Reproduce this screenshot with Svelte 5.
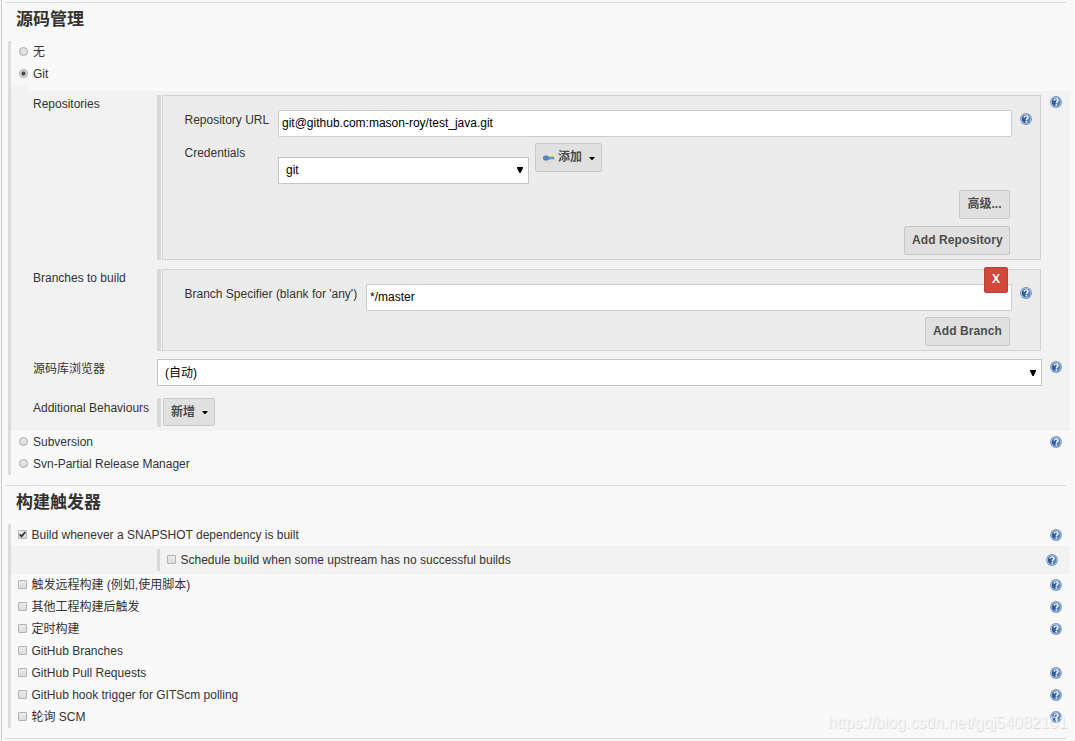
<script lang="ts">
  type Trigger = { label: string; help: boolean };

  const triggers: Trigger[] = [
    { label: "触发远程构建 (例如,使用脚本)", help: true },
    { label: "其他工程构建后触发", help: true },
    { label: "定时构建", help: true },
    { label: "GitHub Branches", help: false },
    { label: "GitHub Pull Requests", help: true },
    { label: "GitHub hook trigger for GITScm polling", help: true },
    { label: "轮询 SCM", help: true },
  ];

  let scm = $state("git");
  let repoUrl = $state("git@github.com:mason-roy/test_java.git");
  let branch = $state("*/master");
</script>

{#snippet help()}
  <svg class="help" viewBox="0 0 12 12" role="img" aria-label="Help">
    <circle cx="6" cy="6" r="5.9" fill="#7393bf" />
    <circle cx="6" cy="6" r="5" fill="#c3d2e6" />
    <circle cx="6" cy="6" r="4.3" fill="#2f5a9e" />
    <path d="M6 1.7a4.3 4.3 0 0 1 0 8.6z" fill="#5e86bc" />
    <path d="M4.1 4.6C4.2 2.4 8 2.3 8 4.5c0 1.3-1.8 1.3-1.8 2.7" fill="none" stroke="#fff" stroke-width="1.4" />
    <rect x="5.4" y="8.1" width="1.6" height="1.4" fill="#fff" />
  </svg>
{/snippet}

{#snippet radio(value: string, label: string, hasHelp: boolean)}
  <div class="row">
    <label class="choice">
      <input class="radio" type="radio" name="scm" {value} bind:group={scm} />
      <span>{label}</span>
    </label>
    {#if hasHelp}{@render help()}{/if}
  </div>
{/snippet}

{#snippet check(label: string, checked: boolean, hasHelp: boolean)}
  <div class="row">
    <label class="choice choice--check">
      <span class="box">
        {#if checked}
          <svg viewBox="0 0 9 9"><path d="M1.8 4.4 3.6 6.4 7.3 2" fill="none" stroke="#333" stroke-width="1.8" /></svg>
        {/if}
      </span>
      <span>{label}</span>
    </label>
    {#if hasHelp}{@render help()}{/if}
  </div>
{/snippet}

{#snippet arrow()}
  <svg class="arrow" viewBox="0 0 6 6"><path d="M0 0h6v1L3.6 6H2.4L0 1z" fill="#000" /></svg>
{/snippet}

{#snippet caret()}
  <svg class="caret" viewBox="0 0 6 3"><path d="M0 0h6L3.5 3h-1z" fill="#000" /></svg>
{/snippet}

<main class="config">
  <section class="section">
    <h2>源码管理</h2>
    <div class="group">
      {@render radio("none", "无", false)}
      {@render radio("git", "Git", false)}

      <div class="git">
        <div class="field field--repos">
          <span class="field__label">Repositories</span>
          <div class="repeat">
            <div class="panel">
              <div class="panel__row panel__row--url">
                <span class="url-label">Repository URL</span>
                <input class="text" type="text" bind:value={repoUrl} />
                {@render help()}
              </div>
              <div class="panel__row panel__row--creds">
                <span class="creds-label">Credentials</span>
                <div class="select select--creds">git{@render arrow()}</div>
                <button class="btn btn--add">
                  <svg class="key" viewBox="0 0 12 10">
                    <ellipse cx="5" cy="9" rx="3.6" ry=".6" fill="#cfcfcf" />
                    <circle cx="9.2" cy="2.6" r="2" fill="#f1e98b" />
                    <ellipse cx="3" cy="5" rx="3" ry="2.6" fill="#4e7bb2" />
                    <path d="M4.5 3.8h6.7v2.8H9.6v-.9H8.2v.9H4.5z" fill="#6490c3" />
                    <circle cx="2" cy="4.7" r=".6" fill="#9dbce0" />
                  </svg>
                  <span>添加</span>
                  {@render caret()}
                </button>
              </div>
              <div class="actions">
                <button class="btn btn--advanced">高级...</button>
                <button class="btn btn--latin">Add Repository</button>
              </div>
            </div>
          </div>
          {@render help()}
        </div>

        <div class="field field--branches">
          <span class="field__label">Branches to build</span>
          <div class="repeat">
            <div class="panel">
              <button class="remove">X</button>
              <div class="panel__row panel__row--branch">
                <span class="branch-label">Branch Specifier (blank for 'any')</span>
                <input class="text" type="text" bind:value={branch} />
                {@render help()}
              </div>
              <div class="actions">
                <button class="btn btn--latin btn--branch">Add Branch</button>
              </div>
            </div>
          </div>
        </div>

        <div class="field field--browser">
          <span class="field__label">源码库浏览器</span>
          <div class="select">(自动){@render arrow()}</div>
          {@render help()}
        </div>

        <div class="field field--extra">
          <span class="field__label">Additional Behaviours</span>
          <div class="repeat repeat--extra">
            <button class="btn btn--new"><span>新增</span>{@render caret()}</button>
          </div>
        </div>
      </div>

      {@render radio("svn", "Subversion", true)}
      {@render radio("svnprm", "Svn-Partial Release Manager", false)}
    </div>
  </section>

  <section class="section section--triggers">
    <h2>构建触发器</h2>
    <div class="group">
      {@render check("Build whenever a SNAPSHOT dependency is built", true, true)}
      <div class="nested">
        {@render check("Schedule build when some upstream has no successful builds", false, true)}
      </div>
      {#each triggers as t}
        {@render check(t.label, false, t.help)}
      {/each}
    </div>
  </section>

  <div class="watermark">https://blog.csdn.net/gqj54082101</div>
</main>

<style>
  :global(body) {
    background: #f9f9f9;
  }

  .config {
    position: relative;
    box-sizing: border-box;
    width: 1074px;
    height: 741px;
    margin-left: 1px;
    padding: 2px 0 0 3px;
    border-left: 1px solid #ccc;
    overflow: hidden;
    color: #333;
    font: 12px/22px "Liberation Sans", "Noto Sans CJK SC", sans-serif;
    white-space: nowrap;
  }

  .config :global(*) {
    box-sizing: border-box;
  }

  .section {
    width: 1061px;
    height: 483px;
    border-top: 1px solid #ddd;
  }

  .section--triggers {
    height: 254px;
    border-bottom: 1px solid #ddd;
  }

  h2 {
    height: 38px;
    margin: 0;
    padding: 4px 0 0 11px;
    font-size: 17px;
    line-height: 25px;
    font-weight: bold;
  }

  .group {
    width: 1062px;
    margin-left: 3px;
    border-left: 3px solid #ddd;
  }

  .row {
    display: flex;
    align-items: center;
    justify-content: space-between;
    height: 22px;
    padding-right: 8px;
  }

  .choice {
    display: flex;
    align-items: center;
    gap: 5px;
    padding-left: 8px;
  }

  .choice--check {
    padding-left: 7px;
    gap: 4.5px;
  }

  .radio {
    appearance: none;
    width: 9px;
    height: 9px;
    margin: 0 0 2px;
    border: 1px solid #a8a8a8;
    border-radius: 50%;
    background: linear-gradient(#e9e9e9, #ddd);
  }

  .radio:checked {
    background: radial-gradient(circle, #4a4a4a 1.7px, #e2e2e2 2.5px);
  }

  .box {
    display: flex;
    width: 9px;
    height: 9px;
    margin-bottom: 2px;
    border: 1px solid #b4b4b4;
    border-radius: 1px;
    background: linear-gradient(#ececec, #dcdcdc);
  }

  .box svg {
    flex: none;
    width: 9px;
    height: 9px;
    margin: -1px;
  }

  .help {
    flex: none;
    width: 12px;
    height: 12px;
  }

  .git {
    height: 340px;
    margin: 7px 0 0;
    padding-top: 4px;
    background: #f2f2f2;
    box-shadow: -2px 0 #d9d9d9;
  }

  .git::before {
    content: "";
    display: block;
    width: 18px;
    height: 6px;
    margin: -10px 0 4px;
    background: #f2f2f2;
  }

  .group > .row:has(+ .git) {
    margin-bottom: -1px;
  }

  .field {
    display: flex;
    align-items: flex-start;
    padding-left: 22px;
  }

  .field__label {
    flex: none;
    width: 124px;
    line-height: 18px;
  }

  .field > .help {
    margin: 1px 0 0 9px;
  }

  .field--repos {
    height: 174px;
  }

  .field--branches {
    height: 90px;
  }

  .field--browser {
    height: 39px;
  }

  .field--browser .field__label,
  .field--extra .field__label {
    line-height: 20px;
  }

  .field--browser > .help {
    margin: 2px 0 0 8px;
  }

  .repeat {
    width: 884px;
    padding-left: 1px;
    border-left: 4px solid #d9d9d9;
  }

  .repeat--extra {
    width: auto;
    height: 29px;
    padding-left: 2px;
  }

  .panel {
    position: relative;
    height: 165px;
    padding: 14px 8px 0 21.5px;
    border: 1px solid #d3d3d3;
    background: #ececec;
  }

  .field--branches .panel {
    height: 82px;
  }

  .panel__row {
    display: flex;
    align-items: flex-start;
  }

  .panel__row--url {
    height: 32px;
  }

  .panel__row--creds {
    height: 48px;
  }

  .panel__row--branch {
    height: 33px;
  }

  .url-label,
  .creds-label {
    flex: none;
    width: 93.5px;
    line-height: 20px;
  }

  .creds-label {
    line-height: 22px;
  }

  .branch-label {
    flex: none;
    width: 181.5px;
    line-height: 20px;
  }

  .panel__row .help {
    margin: 3px 0 0 8px;
  }

  .text {
    flex: 1;
    min-width: 0;
    height: 27px;
    padding: 0 3px 1px;
    border: 1px solid #ccc;
    border-radius: 2px;
    background: #fff;
    color: #000;
    font: inherit;
  }

  .select {
    display: flex;
    align-items: center;
    justify-content: space-between;
    width: 885px;
    height: 27px;
    padding: 0 5px 0 7px;
    border: 1px solid #c6c6c6;
    background: #fff;
    color: #000;
  }

  .select--creds {
    width: 251px;
    margin-top: 15px;
    padding-bottom: 2px;
  }

  .arrow {
    width: 6px;
    height: 6px;
  }

  .caret {
    width: 6px;
    height: 3px;
  }

  .btn {
    height: 29px;
    padding: 0 7px 2px;
    border: 1px solid #c9c9c9;
    border-radius: 2px;
    background: #e0e0e0;
    color: #4d4d4d;
    font: bold 12px/20px "Liberation Sans", "Noto Sans CJK SC", sans-serif;
  }

  .btn--add {
    display: flex;
    align-items: center;
    width: 67px;
    margin: 1px 0 0 6px;
    padding-bottom: 1px;
  }

  .key {
    flex: none;
    width: 12px;
    height: 10px;
    margin: 2px 3px 0 0;
  }

  .btn .caret {
    flex: none;
    margin: 2px 0 0 7px;
  }

  .btn--new {
    display: flex;
    align-items: center;
    width: 52px;
    height: 28px;
    padding-bottom: 1px;
  }

  .btn--advanced {
    width: 51px;
    padding-bottom: 1px;
  }

  .actions {
    display: flex;
    flex-direction: column;
    align-items: flex-end;
    gap: 7px;
    padding-right: 22px;
  }

  .btn--latin {
    width: 106px;
    letter-spacing: 0.1px;
  }

  .btn--branch {
    width: 85px;
  }

  .remove {
    position: absolute;
    top: -3px;
    right: 32px;
    width: 24px;
    height: 26px;
    padding: 0 0 2px;
    border: 1px solid #b93e33;
    border-radius: 2px;
    background: #d24939;
    color: #fff;
    font: bold 12px/20px "Liberation Sans", sans-serif;
  }

  .nested {
    height: 28px;
    padding: 3px 4px 3px 146px;
    background: #f2f2f2;
    box-shadow: -2px 0 #d9d9d9;
  }

  .nested .row {
    border-left: 3px solid #d9d9d9;
  }

  .watermark {
    position: absolute;
    right: 8px;
    bottom: 7px;
    color: #f6f6f6;
    font-size: 16px;
    letter-spacing: -0.03px;
    text-shadow: 1px 1px 1px #ccc;
    opacity: 0.7;
  }
</style>
